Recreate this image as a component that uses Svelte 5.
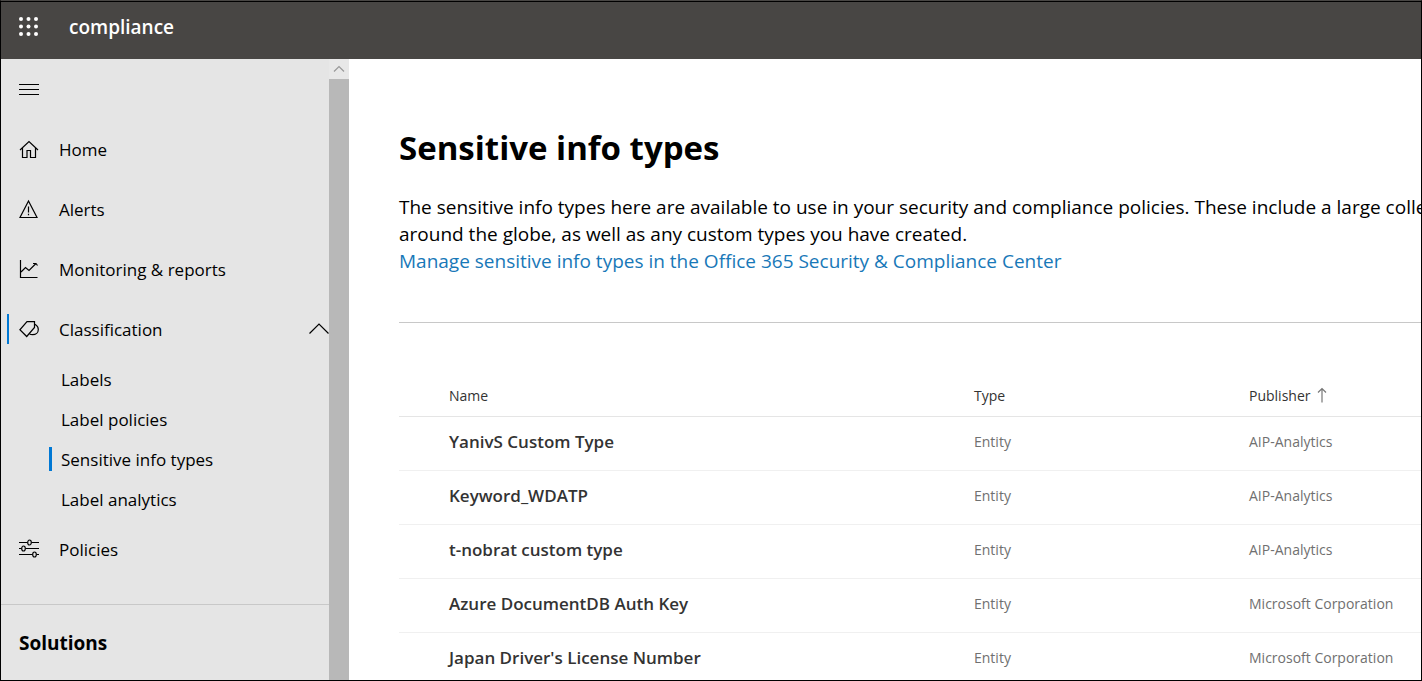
<script>
  const navItems = [
    { label: 'Home', icon: 'home' },
    { label: 'Alerts', icon: 'alert' },
    { label: 'Monitoring & reports', icon: 'chart' },
    {
      label: 'Classification',
      icon: 'tag',
      children: ['Labels', 'Label policies', 'Sensitive info types', 'Label analytics'],
    },
    { label: 'Policies', icon: 'sliders' },
  ];
  const rows = [
    { name: 'YanivS Custom Type', type: 'Entity', publisher: 'AIP-Analytics' },
    { name: 'Keyword_WDATP', type: 'Entity', publisher: 'AIP-Analytics' },
    { name: 't-nobrat custom type', type: 'Entity', publisher: 'AIP-Analytics' },
    { name: 'Azure DocumentDB Auth Key', type: 'Entity', publisher: 'Microsoft Corporation' },
    { name: "Japan Driver's License Number", type: 'Entity', publisher: 'Microsoft Corporation' },
  ];
  const dots = [2, 9.5, 17];
  let expanded = $state(true);
  let current = $state('Sensitive info types');
</script>

{#snippet icon(name)}
  <svg class="icon" viewBox="0 0 20 20" aria-hidden="true">
    {#if name === 'home'}
      <path d="M1 11 10 2.500l9 8.500M3.500 9v9.500h4.500v-7h3.500v7h5V9" />
    {:else if name === 'alert'}
      <path d="M9.500 2 18 18.500H1z" />
      <path d="M9.500 7.500v6M9.500 14.800v1.400" />
    {:else if name === 'chart'}
      <path d="M1.500 1v17.500h17M2 13l4.500-4.500 3.500 3 7-7M14 4.500h3l1.500 2" />
    {:else if name === 'tag'}
      <path d="M8 2.700h7.500v5.800L7.700 17.500.9 10.800z" />
      <path d="M16 5.200c2 1.200 3.300 3 3.300 5.300 0 3-2.500 5.200-5.700 5.200-1.200 0-2.200-.2-3-.7" />
    {:else if name === 'sliders'}
      <path d="M0 3.500h8.500M12.500 3.500H20M0 9.500h2.500M6.500 9.500H20M0 15.500h13.500M17.500 15.500H20" />
      <ellipse cx="10.500" cy="3.500" rx="1.800" ry="2.500" />
      <ellipse cx="4.500" cy="9.500" rx="1.800" ry="2.500" />
      <ellipse cx="15.500" cy="15.500" rx="1.800" ry="2.500" />
    {/if}
  </svg>
{/snippet}

<div class="app">
  <header>
    <button class="waffle" aria-label="App launcher">
      <svg class="icon" viewBox="0 0 20 20" aria-hidden="true">
        {#each dots as y}
          {#each dots as x}
            <circle cx={x} cy={y} r="2" />
          {/each}
        {/each}
      </svg>
    </button>
    <span class="product">compliance</span>
  </header>

  <div class="body">
    <nav>
      <button class="row" aria-label="Collapse navigation">
        <svg class="icon" viewBox="0 0 20 20" aria-hidden="true">
          <path d="M0 5.500h20M0 10.500h20M0 15.500h20" />
        </svg>
      </button>
      <ul>
        {#each navItems as item}
          <li>
            {#if item.children}
              <button class="row active" aria-expanded={expanded} onclick={() => (expanded = !expanded)}>
                {@render icon(item.icon)}
                <span class="grow">{item.label}</span>
                <svg class="icon" class:flipped={!expanded} viewBox="0 0 20 20" aria-hidden="true">
                  <path d="M.5 14.500 10 5l9.500 9.500" />
                </svg>
              </button>
              {#if expanded}
                <ul>
                  {#each item.children as child}
                    <li>
                      <a
                        class="sub"
                        class:current={child === current}
                        href="#{child}"
                        onclick={() => (current = child)}>{child}</a>
                    </li>
                  {/each}
                </ul>
              {/if}
            {:else}
              <a class="row" href="#{item.label}">
                {@render icon(item.icon)}
                <span class="grow">{item.label}</span>
              </a>
            {/if}
          </li>
        {/each}
      </ul>
      <h2>Solutions</h2>
    </nav>

    <div class="scrollbar" aria-hidden="true">
      <svg viewBox="0 0 20 20"><path d="M5 12.500 10 7.500l5 5" /></svg>
      <div class="thumb"></div>
    </div>

    <main>
      <h1>Sensitive info types</h1>
      <p>
        The sensitive info types here are available to use in your security and compliance policies. These include a large collection<br />
        around the globe, as well as any custom types you have created.<br />
        <a href="#manage">Manage sensitive info types in the Office 365 Security &amp; Compliance Center</a>
      </p>
      <hr />
      <table>
        <thead>
          <tr>
            <th class="name">Name</th>
            <th class="type">Type</th>
            <th>
              <span class="sorted">
                Publisher
                <svg viewBox="0 0 10 16" aria-hidden="true"><path d="M5 15.500V1.500M1 5.500l4-4 4 4" /></svg>
              </span>
            </th>
          </tr>
        </thead>
        <tbody>
          {#each rows as r}
            <tr>
              <td class="name">{r.name}</td>
              <td>{r.type}</td>
              <td>{r.publisher}</td>
            </tr>
          {/each}
        </tbody>
      </table>
    </main>
  </div>
</div>

<style>
  :global(body) {
    margin: 0;
    background: #484644;
  }
  .app {
    box-sizing: border-box;
    height: 100vh;
    display: flex;
    flex-direction: column;
    overflow: hidden;
    border: 1px solid #000;
    border-top-color: #484644;
    background: #fff;
    color: #000;
    font-family: 'Segoe UI', 'Open Sans', 'Noto Sans', sans-serif;
    font-size: 17px;
  }
  button {
    border: 0;
    padding: 0;
    background: none;
    color: inherit;
    font: inherit;
    text-align: left;
  }
  a {
    color: inherit;
    text-decoration: none;
  }
  ul {
    list-style: none;
    margin: 0;
    padding: 0;
  }
  .icon {
    width: 20px;
    height: 20px;
    flex: none;
    fill: none;
    stroke: currentColor;
    stroke-width: 1.2;
  }
  .flipped {
    transform: scaleY(-1);
  }
  header {
    box-sizing: border-box;
    flex: none;
    display: flex;
    align-items: center;
    gap: 30px;
    height: 58px;
    padding: 0 18px 7px;
    border-top: 1px solid #000;
    background: #484644;
    color: #fff;
  }
  .waffle {
    display: flex;
  }
  .waffle .icon {
    fill: #fff;
    stroke: none;
  }
  .product {
    font-size: 19px;
    font-weight: 600;
  }
  .body {
    flex: 1;
    min-height: 0;
    display: flex;
  }
  nav {
    flex: none;
    width: 328px;
    overflow: hidden;
    background: #e5e5e5;
  }
  .row {
    box-sizing: border-box;
    width: 100%;
    height: 60px;
    padding-left: 18px;
    display: flex;
    align-items: center;
    gap: 20px;
  }
  .active {
    padding-left: 6px;
  }
  .active::before {
    content: '';
    width: 2px;
    height: 30px;
    margin-right: -10px;
    background: #0078d4;
  }
  .grow {
    flex: 1;
  }
  .sub {
    height: 40px;
    padding-left: 48px;
    display: flex;
    align-items: center;
    gap: 9px;
  }
  .sub::before {
    content: '';
    width: 3px;
    height: 24px;
  }
  .current::before {
    background: #0078d4;
  }
  h2 {
    margin: 25px 0 0;
    padding: 24px 18px;
    border-top: 1px solid #c8c8c8;
    font-size: 19px;
    line-height: 28px;
    font-weight: 700;
  }
  .scrollbar {
    flex: none;
    width: 20px;
    display: flex;
    flex-direction: column;
    background: #e8e8e8;
  }
  .scrollbar svg {
    width: 20px;
    height: 20px;
    fill: none;
    stroke: #999;
    stroke-width: 1.2;
  }
  .thumb {
    flex: 1;
    background: #b8b8b8;
  }
  main {
    flex: 1;
    min-width: 0;
    overflow: hidden;
    padding: 65px 0 0 50px;
  }
  h1 {
    margin: 0;
    font-size: 33px;
    line-height: 48px;
    font-weight: 700;
  }
  p {
    margin: 22px 0 47px;
    font-size: 19px;
    line-height: 27px;
    white-space: nowrap;
  }
  p a {
    color: #1878b8;
  }
  hr {
    margin: 0;
    border: 0;
    border-top: 1px solid #c8c8c8;
  }
  table {
    width: 100%;
    margin-top: 52px;
    border-collapse: collapse;
    table-layout: fixed;
    font-size: 14px;
    color: #707070;
  }
  th,
  td {
    box-sizing: border-box;
    height: 54px;
    padding: 0 0 4px;
    text-align: left;
    font-weight: 400;
    white-space: nowrap;
    border-bottom: 1px solid #f0f0f0;
  }
  th {
    height: 41px;
    padding: 0;
    color: #333;
    border-bottom-color: #e5e5e5;
  }
  .name {
    padding-left: 50px;
  }
  th.name {
    width: 575px;
  }
  th.type {
    width: 275px;
  }
  td.name {
    color: #333;
    font-size: 17px;
    font-weight: 600;
  }
  .sorted {
    display: flex;
    align-items: center;
    gap: 7px;
  }
  .sorted svg {
    width: 10px;
    height: 16px;
    fill: none;
    stroke: #777;
    stroke-width: 1.2;
  }
</style>
